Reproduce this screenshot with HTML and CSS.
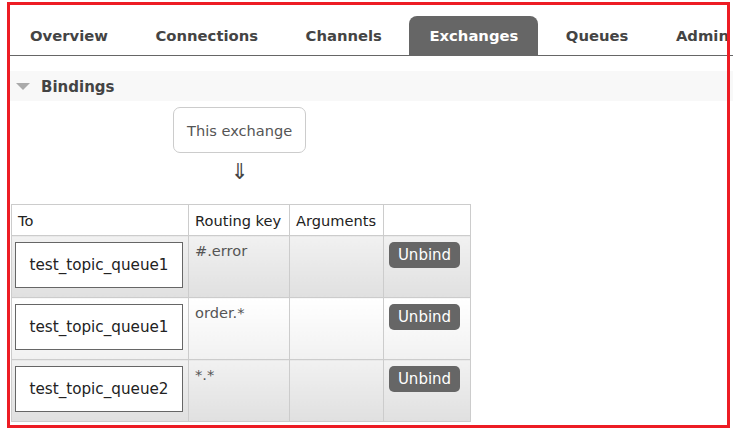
FILE: index.html
```html
<!DOCTYPE html>
<html lang="en">
<head>
    <meta charset="UTF-8"/>
    <title>Exchange: bindings</title>
    <link rel="stylesheet" href="styles.css">
</head>
<body>
<div class="page">
    <!-- main menu -->
    <ul class="menu">
        <li><a href="#">Overview</a></li>
        <li><a href="#">Connections</a></li>
        <li><a href="#">Channels</a></li>
        <li class="selected"><a href="#">Exchanges</a></li>
        <li><a href="#">Queues</a></li>
        <li><a href="#">Admin</a></li>
    </ul>

    <!-- bindings section -->
    <div class="section">
        <h2 class="section-title"><span class="toggle"></span>Bindings</h2>
        <div class="source">
            <div class="this-exchange">This exchange</div>
            <div class="arrow">&#8659;</div>
        </div>
        <table class="bindings">
            <colgroup>
                <col class="col-to">
                <col class="col-key">
                <col class="col-args">
                <col class="col-action">
            </colgroup>
            <thead>
            <tr>
                <th>To</th>
                <th>Routing key</th>
                <th>Arguments</th>
                <th></th>
            </tr>
            </thead>
            <tbody>
            <tr class="alt1">
                <td><span class="queue">test_topic_queue1</span></td>
                <td>#.error</td>
                <td></td>
                <td><button class="unbind">Unbind</button></td>
            </tr>
            <tr class="alt2">
                <td><span class="queue">test_topic_queue1</span></td>
                <td>order.*</td>
                <td></td>
                <td><button class="unbind">Unbind</button></td>
            </tr>
            <tr class="alt1">
                <td><span class="queue">test_topic_queue2</span></td>
                <td>*.*</td>
                <td></td>
                <td><button class="unbind">Unbind</button></td>
            </tr>
            </tbody>
        </table>
    </div>
</div>

<!-- annotation frame drawn over the screenshot -->
<div class="highlight"></div>
</body>
</html>
```

FILE: styles.css
```css
* {
    margin: 0;
    padding: 0;
    box-sizing: border-box;
}

body {
    font-family: "DejaVu Sans", Verdana, sans-serif;
    font-size: 14.6px;
    color: #484848;
    background: #fff;
    overflow: hidden;
}

.page {
    padding-left: 10px;
}

/* 顶部菜单 */
.menu {
    list-style: none;
    display: flex;
    gap: 7.5px;
    padding-top: 16px;
    border-bottom: 1px solid #666;
    white-space: nowrap;
}

.menu li a {
    display: block;
    height: 39px;
    line-height: 40px;
    padding: 0 20px;
    font-size: 14.8px;
    font-weight: bold;
    color: #444;
    text-decoration: none;
    border-radius: 8px 8px 0 0;
}

.menu li.selected a {
    background: #666;
    color: #fff;
}

/* Bindings 区块 */
.section {
    margin-top: 15px;
}

.section-title {
    display: flex;
    align-items: center;
    height: 30px;
    padding-top: 1px;
    background: #f8f8f8;
    font-size: 15px;
    font-weight: bold;
    color: #444;
}

.toggle {
    width: 0;
    height: 0;
    margin: 0 11px 0 6px;
    border-left: 7px solid transparent;
    border-right: 7px solid transparent;
    border-top: 7px solid #aaa;
}

.source {
    display: inline-flex;
    flex-direction: column;
    align-items: center;
    margin: 6px 0 0 163px;
}

.this-exchange {
    height: 46px;
    line-height: 45px;
    padding: 0 13px;
    border: 1px solid #ccc;
    border-radius: 7px;
    color: #555;
}

.arrow {
    font-size: 22px;
    line-height: 26px;
    margin-top: 6px;
    color: #444;
}

/* 绑定表格 */
table.bindings {
    display: table;
    margin: 19px 0 0 1px;
    border-collapse: collapse;
    table-layout: fixed;
    width: 459px;
}

.col-to { width: 177px; }
.col-key { width: 101px; }
.col-args { width: 94px; }
.col-action { width: 87px; }

.bindings th,
.bindings td {
    border: 1px solid #ccc;
    text-align: left;
    vertical-align: top;
}

.bindings th {
    height: 31px;
    padding: 1px 6px 0;
    font-weight: normal;
    color: #222;
    vertical-align: middle;
    background: #fff;
}

.bindings td {
    height: 62px;
    padding: 6px 6px;
    color: #555;
}

.bindings td:first-child {
    padding: 6px 3px;
}

.bindings td:last-child {
    padding-left: 5px;
}

.bindings tr.alt1 td {
    background: linear-gradient(#f1f1f1, #e0e0e0);
}

.bindings tr.alt2 td {
    background: linear-gradient(#fff, #f1f1f1);
}

.queue {
    display: block;
    width: 168px;
    height: 46px;
    line-height: 45px;
    border: 1px solid #666;
    background: #fff;
    color: #222;
    font-size: 15.2px;
    text-align: center;
}

.unbind {
    display: block;
    height: 26px;
    width: 71px;
    border: none;
    border-radius: 5px;
    background: #666;
    color: #fff;
    font-family: inherit;
    font-size: 15px;
}

/* 红色标注框 */
.highlight {
    position: absolute;
    left: 7px;
    top: 2px;
    width: 723px;
    height: 426px;
    border: 3px solid #ed1c24;
    pointer-events: none;
}
```
